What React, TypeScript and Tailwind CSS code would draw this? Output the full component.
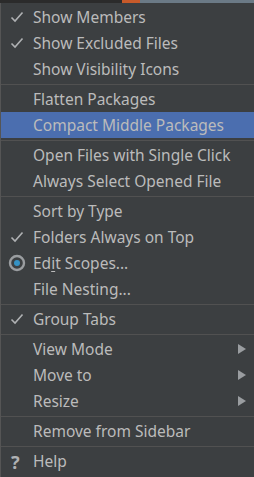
import React from 'react';

type Row =
  | { kind: 'sep' }
  | { kind: 'item'; label: React.ReactNode; icon?: 'check' | 'radio' | 'help'; sub?: boolean; active?: boolean };

const rows: Row[] = [
  { kind: 'item', label: 'Show Members', icon: 'check' },
  { kind: 'item', label: 'Show Excluded Files', icon: 'check' },
  { kind: 'item', label: 'Show Visibility Icons' },
  { kind: 'sep' },
  { kind: 'item', label: 'Flatten Packages' },
  { kind: 'item', label: 'Compact Middle Packages', active: true },
  { kind: 'sep' },
  { kind: 'item', label: 'Open Files with Single Click' },
  { kind: 'item', label: 'Always Select Opened File' },
  { kind: 'sep' },
  { kind: 'item', label: 'Sort by Type' },
  { kind: 'item', label: 'Folders Always on Top', icon: 'check' },
  {
    kind: 'item',
    label: (
      <>
        Ed<span className="underline underline-offset-2">i</span>t Scopes...
      </>
    ),
    icon: 'radio',
  },
  { kind: 'item', label: 'File Nesting...' },
  { kind: 'sep' },
  { kind: 'item', label: 'Group Tabs', icon: 'check' },
  { kind: 'sep' },
  { kind: 'item', label: 'View Mode', sub: true },
  { kind: 'item', label: 'Move to', sub: true },
  { kind: 'item', label: 'Resize', sub: true },
  { kind: 'sep' },
  { kind: 'item', label: 'Remove from Sidebar' },
  { kind: 'sep' },
  { kind: 'item', label: 'Help', icon: 'help' },
];

const Icon = ({ type }: { type?: string }) => {
  if (type === 'check')
    return (
      <svg width="14" height="12" viewBox="0 0 14 12" className="ml-[9px]">
        <path d="M1.5 6.5 L5 10 L12.5 1.5" fill="none" stroke="#afb1b3" strokeWidth="1.6" />
      </svg>
    );
  if (type === 'radio')
    return (
      <svg width="18" height="18" viewBox="0 0 18 18" className="ml-[7px]">
        <circle cx="9" cy="9" r="7" fill="none" stroke="#9a9da0" strokeWidth="2.4" />
        <circle cx="9" cy="9" r="3" fill="#3592c4" />
      </svg>
    );
  if (type === 'help')
    return <span className="ml-[10px] w-[14px] pt-[2px] text-[18px] font-bold text-[#afb1b3]">?</span>;
  return null;
};

export default function App() {
  return (
    <div className="w-[254px] h-[477px] bg-[#2b2b2b] overflow-hidden" style={{ fontFamily: '"Noto Sans", "Open Sans", sans-serif' }}>
      <div className="h-[3px] flex">
        <div className="w-[122px]" />
        <div className="w-[18px] bg-[#c75a2a]" />
        <div className="flex-1 bg-[#6b7a86]" />
      </div>
      <div className="h-[474px] bg-[#3c3f41] border-l border-[#555555] flex flex-col pt-px">
        {rows.map((r, i) =>
          r.kind === 'sep' ? (
            <div key={i} className="h-[4px] flex flex-col justify-center">
              <div className="h-px bg-[#515151]" />
            </div>
          ) : (
            <div
              key={i}
              className={`h-[26px] shrink-0 flex items-center text-[15.5px] ${r.active ? 'bg-[#4b6eaf]' : ''} text-[#bbbbbb]`}
            >
              <div className="w-[32px] flex items-center">
                <Icon type={r.icon} />
              </div>
              <span className="flex-1 whitespace-nowrap pt-[2px]">{r.label}</span>
              {r.sub && (
                <svg width="8" height="10" viewBox="0 0 8 10" className="mr-[8px]">
                  <path d="M0 0 L8 5 L0 10 Z" fill="#9a9da0" />
                </svg>
              )}
            </div>
          )
        )}
      </div>
    </div>
  );
}
